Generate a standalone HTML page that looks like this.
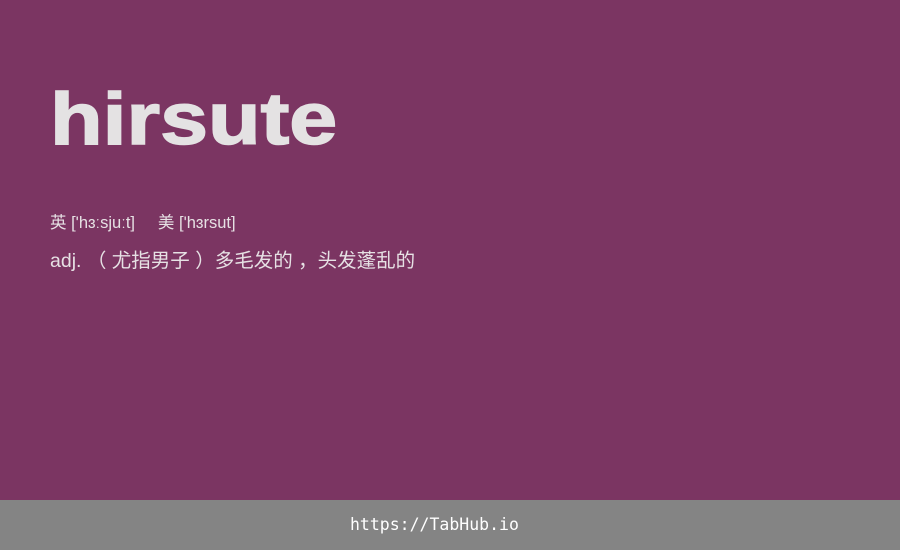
<!DOCTYPE html>
<html><head><meta charset="utf-8"><style>
html,body{margin:0;padding:0}
body{width:900px;height:550px;background:#7b3562;position:relative;overflow:hidden;font-family:"Liberation Sans","Noto Sans CJK SC",sans-serif;color:#e6e1e4}
.w{position:absolute;left:50px;top:83px;font-size:73px;font-weight:bold;line-height:73px;color:#e4e2e3;transform:scaleX(1.18);transform-origin:0 0;-webkit-text-stroke:1.5px #e4e2e3;white-space:nowrap}
.p{position:absolute;left:50px;top:213px;font-size:16.5px;line-height:20px;white-space:pre}
.d{position:absolute;left:50px;top:248px;font-size:19.5px;line-height:26px;white-space:pre}
.f{position:absolute;left:350px;top:500px;height:50px;color:#fff;font-family:"DejaVu Sans Mono","Liberation Mono",monospace;font-size:16.5px;line-height:50px;white-space:nowrap}
.fb{position:absolute;left:0;top:500px;width:900px;height:50px;background:#848484}
</style></head><body>
<div class="w">hirsute</div>
<div class="p">英 ['hɜːsjuːt]     美 ['hɜrsut]</div>
<div class="d">adj. （ 尤指男子 ）多毛发的 ，头发蓬乱的</div>
<div class="fb"></div>
<div class="f">https://TabHub.io</div>
</body></html>
